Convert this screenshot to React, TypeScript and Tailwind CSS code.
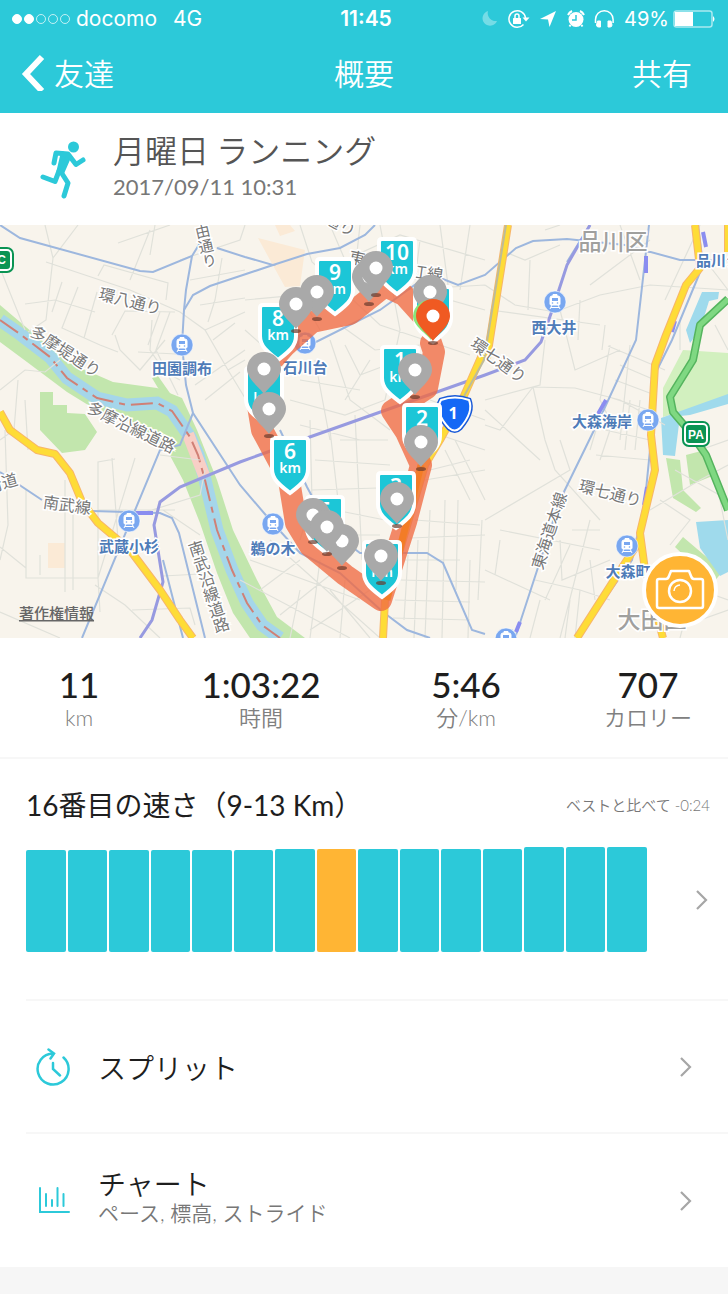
import React from 'react';

const LATIN = "font-['Lato','Noto_Sans_CJK_JP',sans-serif]";

const STATS = [
  { value: '11', label: 'km' },
  { value: '1:03:22', label: '時間' },
  { value: '5:46', label: '分/km' },
  { value: '707', label: 'カロリー' },
];

const BARS = [102, 102, 102, 102, 102, 102, 103, 103, 103, 103, 103, 103, 105, 105, 105];
const CURRENT_BAR = 7;

const SHIELDS = [
  { n: '11', x: 433, y: 288 },
  { n: '10', x: 397, y: 240 },
  { n: '9', x: 335, y: 260 },
  { n: '8', x: 278, y: 306 },
  { n: '7', x: 264, y: 369 },
  { n: '6', x: 290, y: 439 },
  { n: '5', x: 325, y: 498 },
  { n: '4', x: 382, y: 543 },
  { n: '3', x: 396, y: 474 },
  { n: '2', x: 422, y: 406 },
  { n: '1', x: 400, y: 348 },
];

const PINS = [
  [317, 292], [296, 304], [369, 277], [376, 268], [430, 292],
  [264, 369], [269, 409], [415, 370], [421, 442], [397, 499],
  [381, 556], [313, 515], [342, 541], [327, 527],
];

const STATIONS = [
  { name: '田園調布', x: 182, y: 345, tx: 182, ty: 374 },
  { name: '石川台', x: 305, y: 343, tx: 305, ty: 373 },
  { name: '西大井', x: 555, y: 302, tx: 554, ty: 333 },
  { name: '大森海岸', x: 648, y: 420, tx: 602, ty: 427 },
  { name: '武蔵小杉', x: 129, y: 521, tx: 129, ty: 552 },
  { name: '鵜の木', x: 273, y: 524, tx: 273, ty: 554 },
  { name: '大森町', x: 627, y: 546, tx: 628, ty: 577 },
  { name: '', x: 506, y: 639, tx: 0, ty: 0 },
];

const STREETS = [
  { name: '環八通り', x: 130, y: 307, r: 14 },
  { name: '多摩堤通り', x: 65, y: 357, r: 33 },
  { name: '多摩沿線道路', x: 131, y: 433, r: 26 },
  { name: '南武線', x: 67, y: 511, r: 8 },
  { name: '街道', x: 2, y: 489, r: -16 },
  { name: '環七通り', x: 498, y: 366, r: 36 },
  { name: '環七通り', x: 610, y: 499, r: 14 },
  { name: '東海道本線', x: 550, y: 536, r: -72 },
  { name: '通り', x: 340, y: 230, r: 28 },
  { name: '東', x: 357, y: 264, r: 12 },
  { name: '江線', x: 427, y: 279, r: 8 },
];

const LOCAL_ROADS = [
  'M45 225L53 258L46 320L28 332M53 258L78 225M46 262L130 290L180 312L205 330L228 370L245 398',
  'M0 268L25 330M25 304L55 300L95 312M62 282L52 312M78 287L62 328L100 345L118 352M97 292L84 338',
  'M98 276L104 265L168 283L166 300M118 243L170 225M150 255L155 225M130 280L150 230M112 335L125 311L175 312M115 335L120 350L140 370L165 340',
  'M152 320L150 350L165 372L180 380M160 312L148 345M170 312L156 350L178 395M138 352L176 354M180 260L240 240L245 225M190 280L245 270',
  'M205 330L245 312M213 340L235 323M228 370L245 360M195 385L245 350M205 400L240 372M200 305L245 298M222 258L215 300L208 322',
  'M0 390L25 370L45 372L60 360M18 380L14 430L0 440M25 400L28 450M5 430L8 525L0 560',
  'M26 489L26 578L98 578L98 462L115 459M0 547L26 568M73 515L73 590M65 480L65 592M40 555L40 575M98 578L135 458M112 458L118 540M98 510L175 510',
  'M95 585L125 605L160 638M0 612L60 638M98 578L100 612M120 520L200 495L205 470M160 455L200 460M163 510L200 535M163 576L200 574L215 590M132 610L190 608L195 625',
  'M245 300L300 295L320 330M245 330L262 345M300 225L312 262L380 325L470 355M330 225L345 260L400 235L485 260M360 225L356 262M380 225L400 330L385 400M440 225L450 300L485 310M470 225L460 290',
  'M400 290L485 285M420 240L415 280M340 325L375 350L420 345M345 345L360 375L400 360M330 340L350 400L390 430M315 360L330 440M345 400L370 360M290 400L345 415L385 400M300 380L360 390',
  'M310 420L312 500L300 540M330 430L338 500M355 415L362 560M315 460L390 465M312 490L378 488M340 440L388 440M335 510L385 520M345 535L380 535M300 425L360 440',
  'M430 400L485 420M440 435L485 450M425 480L485 470M415 520L480 525M410 538L485 535M405 560L460 560M400 580L485 582M395 600L470 602M393 618L470 620M430 510L425 638M445 500L442 638M458 500L456 590M470 560L468 638M482 520L478 600',
  'M408 555L404 620M418 540L414 638M445 450L470 500M455 440L485 500M430 470L470 460M240 580L350 638M250 560L360 600M270 540L380 638M300 590L290 638M320 560L310 638M330 590L370 638M345 580L340 638M260 590L300 560M280 615L330 575M310 630L370 590',
  'M485 285L515 305L555 312L600 295L650 285L728 290M500 250L525 260L560 245M530 260L528 310M490 310L600 325M560 310L575 370L620 350M580 300L578 340M605 325L602 350M590 285L650 240M545 340L540 385L485 400',
  'M533 387L545 440L555 470L600 520M533 387L575 388L620 400L665 425M485 410L540 460M533 387L500 430L485 425M610 345L600 400L615 430M630 345L620 440M608 346L665 370M620 365L655 380M615 380L655 395M612 398L655 412M630 400L625 450M640 400L635 450M605 430L650 440',
  'M596 455L650 460M596 430L590 450M610 430L600 460M485 520L570 470L560 440M500 530L600 550M570 545L545 600M560 540L562 580L610 560M590 520L560 638M590 560L595 600M535 580L580 590L610 600M485 570L550 600M500 540L495 575M540 600L530 638M570 600L565 638M580 590L575 638M600 530L572 530',
  'M650 510L700 480L728 465M660 500L690 520L670 545M675 470L728 500M720 500L728 540M700 450L728 440M660 560L700 620L728 610M690 600L680 638M700 590L728 600M680 350L680 320M715 325L728 350M705 260L728 290M545 230L560 225M620 225L640 280M665 300L700 225',
];

interface TrainBadgeProps {
  x: number;
  y: number;
}

function TrainBadge({ x, y }: TrainBadgeProps) {
  return (
    <g transform={`translate(${x} ${y})`}>
      <circle r="11" fill="#79a7f0" stroke="#fff" strokeOpacity="0.6" />
      <path d="M-5 -4q0-2 2-2h6q2 0 2 2v6q0 1-1 1h-8q-1 0-1-1zM-2-7.500h4v2h-4zM-3 3l-2 4M3 3l2 4M-4 5.500h8" fill="#fff" stroke="#fff" />
      <path d="M-3 -4h6v3h-6z" fill="#79a7f0" />
      <circle cx="-2.500" cy="1" r="0.800" fill="#79a7f0" />
      <circle cx="2.500" cy="1" r="0.800" fill="#79a7f0" />
    </g>
  );
}

function Shield({ n, x, y }: { n: string; x: number; y: number }) {
  return (
    <g transform={`translate(${x} ${y})`}>
      <path
        d="M-15-1h30q3 0 3 3v28C18 41 9 47 0 54C-9 47-18 41-18 30v-28q0-3 3-3z"
        fill="#1cc6d7"
        stroke="#fff"
        strokeWidth="4"
      />
      <text y="20" textAnchor="middle" fill="#fff" className="font-['Noto_Sans',sans-serif] text-[21px] font-semibold">{n}</text>
      <text y="34" textAnchor="middle" fill="#fff" className="font-['Noto_Sans',sans-serif] text-[14px] font-semibold">km</text>
    </g>
  );
}

function Pin({ x, y, color }: { x: number; y: number; color: string }) {
  return (
    <g transform={`translate(${x} ${y})`}>
      <ellipse cy="27" rx="5" ry="2" fill="#6b3a2c" fillOpacity="0.7" />
      <path d="M0 25C-3 20-17 10-17 0A17 17 0 0 1 17 0C17 10 3 20 0 25z" fill={color} />
      <circle r="6.500" fill="#fff" />
    </g>
  );
}

function RouteMap() {
  return (
    <svg viewBox="0 225 728 413" className="block w-full bg-[#f8f4ec] font-['Noto_Sans_CJK_JP',sans-serif]" role="img" aria-label="ルート">
      {/* land */}
      <path d="M258 238L305 250L300 286L285 287L270 260zM48 543h17v25h-17zM275 225h15l5 6-15 5z" fill="#fbead6" />
      <path d="M0 305L33 333L67 362L113 382L157 388L182 398L197 430L217 480L233 530L257 580L277 617L305 638H250L233 613L217 573L200 523L183 480L167 450L140 425L93 408L67 392L27 362L0 342z" fill="#c2e6ad" />
      <path d="M152 378L158 376L172 396L164 398zM40 392h13v13h14v8l18 1l12 18l-12 18l-23 3l-22-23z" fill="#c2e6ad" />
      <path d="M683 350L728 353V398L663 417V388z" fill="#d2f0bf" />
      <path d="M666 458l14 2l3 30l18 18l-5 4l-23-14zM686 455l19-5l10 25l-25 10zM683 537l40 34l-10 12l-38-36z" fill="#c2e6ad" />

      {/* water */}
      <path d="M0 320L20 334L50 357L67 378L97 398L127 405L157 403L172 411L190 437L198 455L205 480L217 530L232 570L247 603L262 625L280 638" fill="none" stroke="#a5d6ea" strokeWidth="13" />
      <path d="M188 434L205 478" stroke="#f8cfc6" strokeWidth="12" />
      <path d="M702 292h17l-1 7l-9 2l-9 29l-10 13l-4-13zM728 394V404L690 415L680 416L675 456L663 455L661 418zM696 522l32-2v52l-8 4l-20-28z" fill="#9fdaec" />
      <path d="M0 320L20 334L50 357L67 378L97 398L127 405L157 403L172 411L190 437L198 455L205 480L217 530L232 570L247 603L262 625L280 638" fill="none" stroke="#d08076" strokeWidth="2" strokeDasharray="22 6 6 6" />

      <path d={LOCAL_ROADS.join('')} fill="none" stroke="#e0e1da" strokeWidth="1.200" />

      {/* railways */}
      <g fill="none" stroke="#9db7de" strokeWidth="2">
        <path d="M0 225L20 238L140 271L153 272L192 256L200 243M217 248L245 257L273 265L240 276L210 286L193 295L184 310L182 345L186 385L193 413L240 485L270 520L300 553L340 573L383 612L407 630L430 638" />
        <path d="M273 265L307 254L340 248L365 235L375 225M192 256L186 290L184 310M193 413L180 445L160 450L82 638" />
        <path d="M0 472L42 500M92 511L160 513L172 518L179 533L205 638M163 560L183 638M280 430L307 487L330 530L360 553H427L443 563L472 630L485 634" />
        <path d="M300 350L380 310L430 274L458 285L485 275L516 248L533 241L567 239L625 245L680 260H728M567 262L590 225M649 225L636 340L600 418L560 500L516 635L512 638" />
        <path d="M698 225L703 265L672 340L657 370L652 430L645 500L632 560L590 620" />
      </g>
      <path d="M140 638L152 620L163 582L154 525L160 502L180 487L240 462L290 444L485 375L525 360L541 342L554 305L567 265L590 225" fill="none" stroke="#979ae0" strokeWidth="3" />
      <path d="M136 513h17M646 256v17M606 400l-8 14M703 232l3 15M647 487l-3 18M675 321l-3 11M520 622l-4 10" fill="none" stroke="#8a8df0" strokeWidth="4" />

      {/* main roads */}
      <g fill="none" strokeLinejoin="round">
        <path d="M0 412L10 430L37 450L55 454L70 473L82 502L98 523L130 550L160 590L180 620L193 638M508 225L487 358M485 348L463 398L440 440L425 465L385 600L383 638M695 225L700 268L686 285L666 335L655 365L651 435L655 470L640 533L645 570L663 638M640 540L616 577L577 638M728 225V252" stroke="#f7b56a" strokeWidth="8" />
        <path d="M0 412L10 430L37 450L55 454L70 473L82 502L98 523L130 550L160 590L180 620L193 638M508 225L487 358M485 348L463 398L440 440L425 465L385 600L383 638M695 225L700 268L686 285L666 335L655 365L651 435L655 470L640 533L645 570L663 638M640 540L616 577L577 638M728 225V252" stroke="#fedc37" strokeWidth="6" />
        <path d="M506 225L484 360L463 398" stroke="#bdbb9a" strokeWidth="2" />
        <path d="M728 299L700 325L693 360L670 397L673 412L690 432L706 455L728 510" stroke="#55b45e" strokeWidth="8" />
        <path d="M728 299L700 325L693 360L670 397L673 412L690 432L706 455L728 510" stroke="#7fd882" strokeWidth="5" />
      </g>

      {/* street names */}
      {STREETS.map((s, i) => (
        <text
          key={i}
          x={s.x}
          y={s.y}
          transform={`rotate(${s.r} ${s.x} ${s.y - 5})`}
          textAnchor="middle"
          fill="#777"
          stroke="#fff"
          strokeWidth="3"
          paintOrder="stroke"
          className="text-[16px]"
        >
          {s.name}
        </text>
      ))}
      <text x="201" y="224" transform="rotate(-13 201 225)" fill="#777" stroke="#fff" strokeWidth="3" paintOrder="stroke" className="text-[15px] [writing-mode:vertical-rl]">由通り</text>
      <text x="194" y="541" transform="rotate(-18 194 541)" fill="#777" stroke="#fff" strokeWidth="3" paintOrder="stroke" className="text-[16px] [writing-mode:vertical-rl]">南武沿線道路</text>
      <g textAnchor="middle" fill="#a0a09e" stroke="#fff" strokeWidth="3" paintOrder="stroke" className="text-[23px] font-medium">
        <text x="613" y="250">品川区</text>
        <text x="652" y="628">大田区</text>
      </g>

      {STATIONS.map((s) => (
        <g key={`${s.x}-${s.y}`}>
          <TrainBadge x={s.x} y={s.y} />
          <text x={s.tx} y={s.ty} textAnchor="middle" fill="#4f7cb8" stroke="#fff" strokeWidth="3" paintOrder="stroke" className="text-[15px] font-bold">{s.name}</text>
        </g>
      ))}
      <text x="696" y="266" fill="#4f7cb8" stroke="#fff" strokeWidth="3" paintOrder="stroke" className="text-[15px] font-bold">品川シ</text>

      {/* highway signs */}
      <g fill="#0a9453" stroke="#fff" strokeWidth="2">
        <rect x="-12" y="248" width="25" height="24" rx="6" stroke="#0a9453" />
        <rect x="-10" y="250" width="21" height="20" rx="4" />
        <rect x="683" y="422" width="26" height="24" rx="6" stroke="#0a9453" />
        <rect x="685" y="424" width="22" height="20" rx="4" />
      </g>
      <g textAnchor="middle" fill="#fff" className="font-['Liberation_Sans',sans-serif] text-[12px] font-bold">
        <text x="0" y="264">IC</text>
        <text x="696" y="439">PA</text>
      </g>

      {/* the run itself */}
      <g fill="none" stroke="#f06a43" strokeWidth="22" strokeLinecap="round" strokeLinejoin="round" opacity="0.78">
        <path d="M431 343L434 352L427 388L392 411L406 432L421 465L406 522L381 600L345 575L310 546L296 523L289 480L262 430L257 400L262 372L285 346L312 322L350 314L385 286L404 295L422 315" />
      </g>
      <path d="M421 465L387 600" stroke="#f47b20" strokeWidth="7" opacity="0.8" />

      <g transform="translate(454 413)">
        <path d="M-13-13Q1-18 15-13Q20-1 6 15Q1 20-5 15Q-20-1-13-13z" fill="#1468f5" stroke="#1a5ad8" strokeWidth="5" />
        <path d="M-13-13Q1-18 15-13Q20-1 6 15Q1 20-5 15Q-20-1-13-13z" fill="#1468f5" stroke="#fff" strokeWidth="2" />
        <text x="-1" y="6" textAnchor="middle" fill="#fff" className="font-['Noto_Sans',sans-serif] text-[16px] font-bold">1</text>
      </g>

      {SHIELDS.map((s) => <Shield key={s.n} {...s} />)}
      {PINS.map(([x, y]) => <Pin key={`${x}-${y}`} x={x} y={y} color="#a9a9a9" />)}
      <path d="M431 340C428 335 413 326 413 316A17 17 0 0 1 433 300z" fill="#8ae57a" />
      <Pin x={433} y={316} color="#f05a22" />

      <a href="#copyright">
        <text x="19" y="619" fill="#666" className="text-[15px] font-medium underline [text-decoration-skip-ink:none]">著作権情報</text>
      </a>
    </svg>
  );
}

function StatusBar() {
  return (
    <div className="grid h-[37px] grid-cols-[1fr_auto_1fr] items-center px-3 font-['Inter',sans-serif] text-[21px] leading-6">
      <div className="flex items-center">
        <svg width="60" height="12" viewBox="0 0 60 12" fill="none" stroke="#fff" aria-hidden="true">
          <circle cx="5" cy="6" r="4.500" fill="#fff" />
          <circle cx="17" cy="6" r="4.500" fill="#fff" />
          <g strokeOpacity="0.7">
            <circle cx="29" cy="6" r="4.500" />
            <circle cx="41" cy="6" r="4.500" />
            <circle cx="53" cy="6" r="4.500" />
          </g>
        </svg>
        <span className="ml-1">docomo</span>
        <span className="ml-4">4G</span>
      </div>
      <span className="pl-1 font-semibold">11:45</span>
      <div className="flex items-center justify-end">
        <svg width="136" height="22" viewBox="0 0 136 22" fill="none" stroke="#fff" strokeWidth="1.500" className="shrink-0" aria-hidden="true">
          <path d="M8 3A7.500 7.500 0 1 0 17 13A8 8 0 0 1 8 3z" fill="#fff" stroke="none" opacity="0.35" />
          <path d="M43.500 16.500A8.300 8.300 0 1 1 45.500 10" />
          <path d="M42.500 9.500h7l-3.500 4z" fill="#fff" stroke="none" />
          <rect x="33" y="10" width="8" height="6" rx="0.500" fill="#fff" stroke="none" />
          <path d="M35 10V8a2 2 0 0 1 4 0v2" />
          <path d="M60 11L76 3L69.500 19L68 11.500z" fill="#fff" stroke="none" />
          <circle cx="96" cy="11.500" r="7.500" fill="#fff" stroke="none" />
          <path d="M90.500 17l-1 1.500M101.500 17l1 1.500" strokeWidth="2" />
          <path d="M88 7a9 9 0 0 1 4-4M100 3a9 9 0 0 1 4 4" strokeWidth="2" />
          <path d="M96 7v5h-4" stroke="#2cc9d9" />
          <path d="M115.500 15V11.500a8.800 8.800 0 0 1 17.600 0V15" />
          <path d="M117.500 13h3v6h-2q-2 0-2-2zM131 13h-3v6h2q2 0 2-2z" fill="#fff" strokeWidth="1" />
        </svg>
        <span className="ml-2 whitespace-nowrap text-[20px]">49%</span>
        <svg width="43" height="18" viewBox="0 0 43 18" className="ml-1 shrink-0" aria-hidden="true">
          <rect x="1" y="1" width="38" height="16" rx="2.500" fill="none" stroke="#fff" strokeOpacity="0.6" strokeWidth="1.500" />
          <path d="M2 2h18v14h-18zM40 6q3 3 0 6z" fill="#fff" />
        </svg>
      </div>
    </div>
  );
}

function Chevron() {
  return (
    <svg width="14" height="22" viewBox="0 0 14 22" fill="none" stroke="#a6a6a6" strokeWidth="2.200" className="shrink-0" aria-hidden="true">
      <path d="M1 2L10 11L1 20" />
    </svg>
  );
}

export default function App() {
  return (
    <div className="flex min-h-screen w-full flex-col bg-[#f6f6f6] font-['Noto_Sans_CJK_JP',sans-serif] text-[#1e1e1e]">
      <header className="h-[113px] bg-[#2cc9d9] text-white">
        <StatusBar />
        <nav className="grid h-[70px] grid-cols-3 items-center pr-9 pl-5 text-[30px] leading-9 font-[350]">
          <button className="flex items-center gap-2 justify-self-start">
            <svg width="26" height="38" viewBox="0 0 26 38" fill="none" stroke="#fff" strokeWidth="6" aria-hidden="true">
              <path d="M22 4L6 21L22 38" />
            </svg>
            友達
          </button>
          <h1 className="justify-self-center pl-4">概要</h1>
          <button className="justify-self-end">共有</button>
        </nav>
      </header>

      <section className="flex h-[112px] items-center bg-white pl-10">
        <svg width="48" height="60" viewBox="0 0 48 60" fill="none" stroke="#2cc9d9" strokeLinecap="round" strokeLinejoin="round" aria-hidden="true">
          <circle cx="33.500" cy="8" r="5.500" fill="#2cc9d9" stroke="none" />
          <path d="M23 15L29 17L22 33L19 32z" fill="#2cc9d9" strokeWidth="5" />
          <path d="M14 24L16 14L28 15L36 25.500L43 21" strokeWidth="5" />
          <path d="M19 32L15 42.500L3 38" strokeWidth="5" />
          <path d="M21 33L28 44L24 57" strokeWidth="5" />
        </svg>
        <div className="ml-[25px]">
          <h2 className="text-[32px] leading-9 font-[350] text-[#555]">月曜日 ランニング</h2>
          <p className={`${LATIN} text-[22px] leading-10 text-[#777]`}>2017/09/11 10:31</p>
        </div>
      </section>

      <div className="relative">
        <RouteMap />
        <button aria-label="写真を追加" className="absolute right-2.5 bottom-2.5 flex size-[76px] items-center justify-center rounded-full border-4 border-white bg-[#ffb534]">
          <svg width="50" height="42" viewBox="0 0 50 42" fill="none" stroke="#fff" strokeWidth="2.500" strokeLinejoin="round" aria-hidden="true">
            <path d="M4 10H11Q13 10 14 7L16 2H34L36 7Q37 10 39 10H46Q48 10 48 12V37Q48 39 46 39H4Q2 39 2 37V12Q2 10 4 10z" />
            <circle cx="25" cy="22" r="11" />
            <path d="M19 22A6 6 0 0 1 25 16" strokeWidth="1.500" />
          </svg>
        </button>
      </div>

      <dl className="grid h-[121px] grid-cols-[158fr_206fr_204fr_160fr] items-center border-b-2 border-[#f7f7f7] bg-white text-center">
        {STATS.map((s) => (
          <div key={s.label} className="flex flex-col-reverse">
            <dt className={`${LATIN} text-[22px] leading-7 font-[350] text-[#808080]`}>{s.label}</dt>
            <dd className={`${LATIN} text-[35px] leading-10 font-medium`}>{s.value}</dd>
          </div>
        ))}
      </dl>

      <section className="bg-white pl-[26px]">
        <div className="flex h-[88px] items-center justify-between pt-1 pr-[18px]">
          <h3 className={`${LATIN} text-[28px] leading-10`}>16番目の速さ（9-13 Km）</h3>
          <p className={`${LATIN} text-[15px] leading-6 font-[350] text-[#777]`}>ベストと比べて -0:24</p>
        </div>
        <div className="flex h-[154px] items-start border-b-2 border-[#f7f7f7] pr-[18px]">
          <div className="flex h-[105px] flex-1 items-end gap-0.5">
            {BARS.map((h, i) => (
              <div
                key={i}
                className={`flex-1 rounded-xs ${i === CURRENT_BAR ? 'bg-[#ffb534]' : 'bg-[#2cc9d9]'}`}
                style={{ height: h }}
              />
            ))}
          </div>
          <button aria-label="詳細" className="flex h-[105px] w-[63px] items-center justify-end">
            <Chevron />
          </button>
        </div>
      </section>

      <section className="bg-white pl-[26px]">
        <button className="flex h-[133px] w-full items-center border-b-2 border-[#f7f7f7] pr-[34px] text-left">
          <svg width="54" height="40" viewBox="0 0 54 40" fill="none" stroke="#2cc9d9" strokeWidth="2.500" strokeLinecap="round" aria-hidden="true">
            <path d="M37.500 10.500A15.500 15.500 0 1 1 27 6.500M22.500 2.500L28 6.500L24.500 11.500M27 16V22L34 28.500" />
          </svg>
          <span className="ml-[18px] flex-1 text-[28px] leading-9 font-[350]">スプリット</span>
          <Chevron />
        </button>
        <button className="flex h-[133px] w-full items-center pr-[34px] text-left">
          <svg width="54" height="40" viewBox="0 0 54 40" fill="none" stroke="#2cc9d9" strokeWidth="2" strokeLinecap="round" aria-hidden="true">
            <path d="M14 7V31H43M20 13V25M26 19V25M31.500 7V25M37.500 13V25" />
          </svg>
          <span className="ml-[18px] flex flex-1 flex-col pb-2">
            <span className="text-[28px] leading-8 font-[350]">チャート</span>
            <span className={`${LATIN} text-[21px] leading-7 font-[350] text-[#777]`}>ペース, 標高, ストライド</span>
          </span>
          <Chevron />
        </button>
      </section>
    </div>
  );
}
